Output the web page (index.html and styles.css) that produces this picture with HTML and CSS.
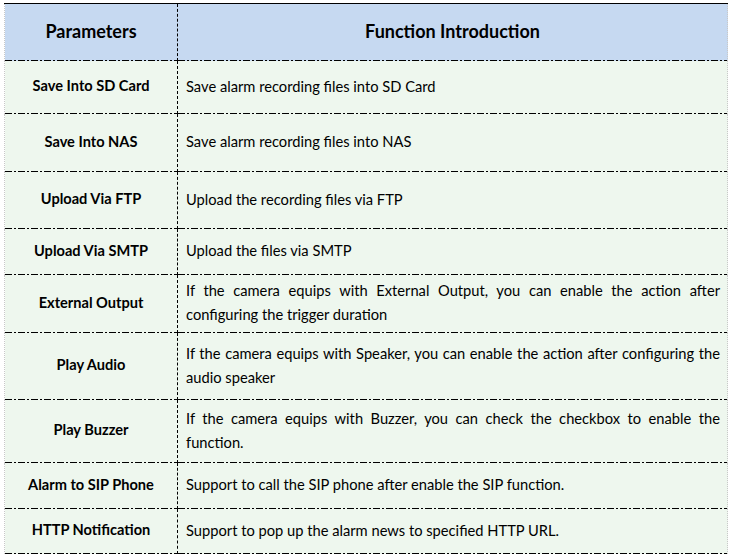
FILE: index.html
```html
<!DOCTYPE html>
<html>
<head>
<meta charset="utf-8">
<link rel="stylesheet" href="styles.css">
</head>
<body>
<table class="params">
  <colgroup><col class="c1"><col class="c2"></colgroup>
  <thead>
    <tr class="r-head"><th>Parameters</th><th>Function Introduction</th></tr>
  </thead>
  <tbody>
    <tr class="r1"><td class="name">Save Into SD Card</td><td class="desc">Save alarm recording files into SD Card</td></tr>
    <tr class="r2"><td class="name">Save Into NAS</td><td class="desc">Save alarm recording files into NAS</td></tr>
    <tr class="r3"><td class="name">Upload Via FTP</td><td class="desc">Upload the recording files via FTP</td></tr>
    <tr class="r4"><td class="name">Upload Via SMTP</td><td class="desc">Upload the files via SMTP</td></tr>
    <tr class="r5"><td class="name">External Output</td><td class="desc">If the camera equips with External Output, you can enable the action after configuring the trigger duration</td></tr>
    <tr class="r6"><td class="name">Play Audio</td><td class="desc">If the camera equips with Speaker, you can enable the action after configuring the audio speaker</td></tr>
    <tr class="r7"><td class="name">Play Buzzer</td><td class="desc">If the camera equips with Buzzer, you can check the checkbox to enable the function.</td></tr>
    <tr class="r8"><td class="name">Alarm to SIP Phone</td><td class="desc">Support to call the SIP phone after enable the SIP function.</td></tr>
    <tr class="r9"><td class="name">HTTP Notification</td><td class="desc">Support to pop up the alarm news to specified HTTP URL.</td></tr>
  </tbody>
</table>
</body>
</html>
```
FILE: styles.css
```css
html, body {
  margin: 0;
  padding: 0;
  background: #ffffff;
}
body {
  padding: 3px 0 0 4px;
  font-family: Lato, "Open Sans", sans-serif;
  color: #000;
}
.params {
  border-collapse: collapse;
  table-layout: fixed;
  width: 723px;
  border-top: 1px solid #000;
}
.c1 { width: 173px; }
.c2 { width: 550px; }
.params th,
.params td {
  padding: 0 0 3px 0;
  vertical-align: middle;
  background-color: #eef7ee;
  background-image: repeating-linear-gradient(to right, #000 0 7px, transparent 7px 9px, #000 9px 11px, transparent 11px 13px);
  background-size: 100% 1px;
  background-position: left bottom;
  background-repeat: no-repeat;
}
.params th:first-child,
.params td:first-child {
  border-left: 1px dotted #c8c8c8;
  border-right: 1px dashed #000;
  text-align: center;
}
.params th:last-child,
.params td:last-child {
  border-right: 1px dotted #c8c8c8;
}
.params th {
  background-color: #c6d9f1;
  font-weight: 700;
  font-size: 18px;
  text-align: center;
}
.name {
  font-weight: 700;
  font-size: 14.6px;
}
.params .desc {
  font-size: 14.7px;
  line-height: 24px;
  text-align: justify;
  padding: 0 7px 3px 8px;
}
.r-head { height: 57px; }
.r1 { height: 53px; }
.r2 { height: 58px; }
.r3 { height: 57px; }
.r4 { height: 46px; }
.r5 { height: 58px; }
.r6 { height: 67px; }
.r7 { height: 63px; }
.r8 { height: 46px; }
.r9 { height: 45px; }
```
